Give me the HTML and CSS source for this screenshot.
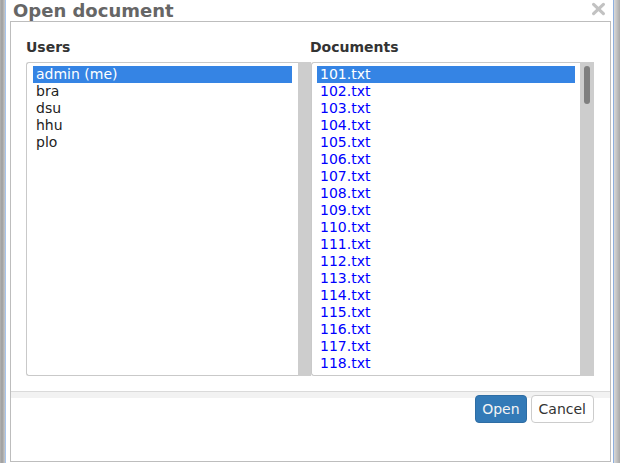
FILE: index.html
```html
<!DOCTYPE html>
<html lang="en">
<head>
<meta charset="utf-8">
<title>Open document</title>
<link rel="stylesheet" href="styles.css">
</head>
<body>
<div class="window">
  <div class="frame-left"></div>
  <div class="dialog">
    <div class="titlebar">
      <span class="title">Open document</span>
      <svg class="close" viewBox="0 0 15 14" aria-label="close">
        <path d="M2.6 2.4 L12.4 11.6 M12.4 2.4 L2.6 11.6" stroke="#c2c2c2" stroke-width="3.2" stroke-linecap="round" fill="none"/>
      </svg>
    </div>
    <div class="panel">
      <div class="columns">
        <div class="col users">
          <div class="label">Users</div>
          <div class="box">
            <ul class="list">
              <li class="sel">admin (me)</li>
              <li>bra</li>
              <li>dsu</li>
              <li>hhu</li>
              <li>plo</li>
            </ul>
            <div class="track"></div>
          </div>
        </div>
        <div class="col docs">
          <div class="label">Documents</div>
          <div class="box">
            <ul class="list">
              <li class="sel">101.txt</li>
              <li>102.txt</li>
              <li>103.txt</li>
              <li>104.txt</li>
              <li>105.txt</li>
              <li>106.txt</li>
              <li>107.txt</li>
              <li>108.txt</li>
              <li>109.txt</li>
              <li>110.txt</li>
              <li>111.txt</li>
              <li>112.txt</li>
              <li>113.txt</li>
              <li>114.txt</li>
              <li>115.txt</li>
              <li>116.txt</li>
              <li>117.txt</li>
              <li>118.txt</li>
            </ul>
            <div class="track"><div class="thumb"></div></div>
          </div>
        </div>
      </div>
      <div class="footer">
        <button class="btn btn-primary">Open</button>
        <button class="btn">Cancel</button>
      </div>
    </div>
  </div>
  <div class="frame-right"></div>
</div>
</body>
</html>
```
FILE: styles.css
```css
html, body {
  margin: 0;
  padding: 0;
}
body {
  font-family: "DejaVu Sans", "Liberation Sans", sans-serif;
  background: #fff;
  overflow: hidden;
}
.window {
  display: flex;
  height: 463px;
}
.frame-left {
  width: 7px;
  background: linear-gradient(to right, #b4b4b4 0, #9d9d9d 2px, #c9c9c9 5px, #a6c4ec 5px, #a6c4ec 6px, #ffffff 6px);
}
.frame-right {
  width: 7px;
  background: linear-gradient(to right, #8eb0e0 0, #8eb0e0 1px, #d9d9d9 1px, #a9a9a9 7px);
}
.dialog {
  flex: 1;
  display: flex;
  flex-direction: column;
  padding: 0 2px 1px 3px;
}
.titlebar {
  height: 21px;
  display: flex;
  justify-content: space-between;
  align-items: flex-start;
  padding: 0 5px 0 3px;
}
.title {
  font-weight: bold;
  font-size: 18px;
  line-height: 21px;
  color: #666;
}
.close {
  width: 15px;
  height: 14px;
  margin-top: 2px;
}
.panel {
  flex: 1;
  border: 1px solid #bdbdbd;
  display: flex;
  flex-direction: column;
  padding-top: 17px;
}
.columns {
  display: flex;
  padding: 0 16px 0 15px;
}
.users {
  width: 285px;
}
.docs {
  width: 283px;
}
.label {
  font-weight: bold;
  font-size: 14px;
  line-height: 17px;
  color: #333;
  margin-bottom: 6px;
}
.docs .label {
  margin-left: -1px;
}
.box {
  display: flex;
  height: 314px;
}
.list {
  flex: 1;
  margin: 0;
  list-style: none;
  border: 1px solid #c9c9c9;
  border-right: 0;
  border-radius: 3px 0 0 3px;
  padding: 3px 6px 0;
  overflow: hidden;
  font-size: 14px;
  line-height: 17px;
  color: #222;
}
.docs .list {
  padding: 3px 5px 0;
  color: #0000ff;
}
.list li {
  padding-left: 3px;
  white-space: nowrap;
}
.list li.sel {
  background: #3584e4;
  color: #fff;
}
.track {
  width: 13px;
  background: #cdcdcd;
}
.docs .track {
  width: 14px;
}
.thumb {
  width: 6px;
  height: 38px;
  margin: 4px 0 0 4px;
  border-radius: 3px;
  background: #7f7f7f;
}
.footer {
  flex: 1;
  margin-top: 15px;
  border-top: 1px solid #dadada;
  background: linear-gradient(#f2f2f2 0, #f2f2f2 6px, #fff 6px);
  padding: 3px 16px 0;
  display: flex;
  justify-content: flex-end;
  align-items: flex-start;
  gap: 4px;
}
.btn {
  height: 28px;
  padding: 0 7px;
  font-family: "DejaVu Sans", "Liberation Sans", sans-serif;
  font-size: 14px;
  border-radius: 4px;
  background: #fff;
  border: 1px solid #ccc;
  color: #333;
}
.btn-primary {
  padding: 0 6px;
  background: #337ab7;
  border-color: #2e6da4;
  color: #f4f4f4;
}
```
